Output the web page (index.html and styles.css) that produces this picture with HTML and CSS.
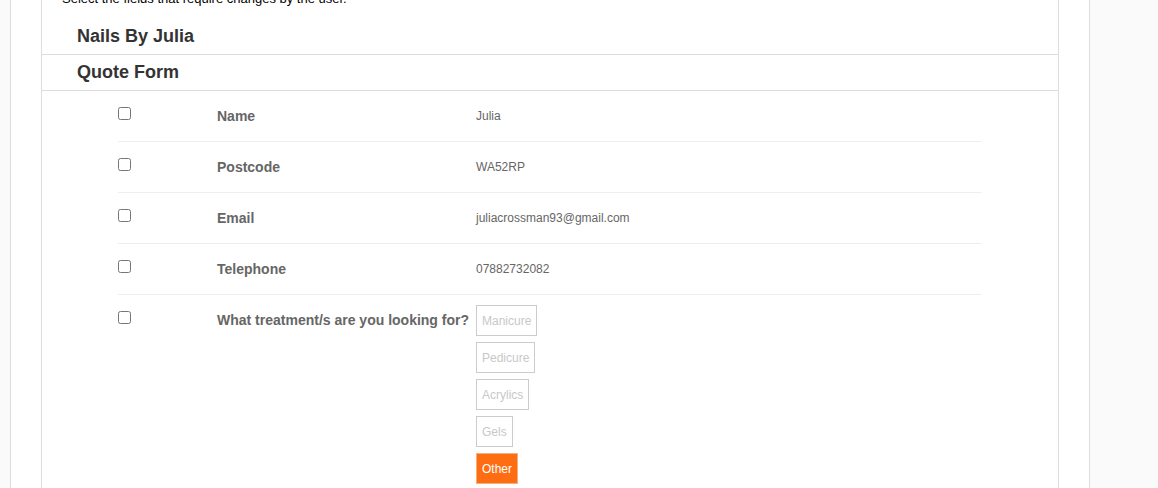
FILE: index.html
```html
<!DOCTYPE html>
<html lang="en">

<head>
    <meta charset="UTF-8">
    <meta name="viewport" content="width=device-width, initial-scale=1.0">
    <title>Quote Form</title>
    <link rel="stylesheet" href="styles.css">
</head>

<body>
    <div class="page">
        <div class="panel">
            <p class="intro">Select the fields that require changes by the user.</p>
            <div class="section_title">Nails By Julia</div>
            <div class="section_title">Quote Form</div>
            <div class="fields">
                <div class="field_row">
                    <div class="check"><input type="checkbox"></div>
                    <div class="label">Name</div>
                    <div class="value">Julia</div>
                </div>
                <div class="field_row">
                    <div class="check"><input type="checkbox"></div>
                    <div class="label">Postcode</div>
                    <div class="value">WA52RP</div>
                </div>
                <div class="field_row">
                    <div class="check"><input type="checkbox"></div>
                    <div class="label">Email</div>
                    <div class="value">juliacrossman93@gmail.com</div>
                </div>
                <div class="field_row">
                    <div class="check"><input type="checkbox"></div>
                    <div class="label">Telephone</div>
                    <div class="value">07882732082</div>
                </div>
                <div class="field_row last">
                    <div class="check"><input type="checkbox"></div>
                    <div class="label">What treatment/s are you looking for?</div>
                    <div class="options">
                        <span class="option">Manicure</span>
                        <span class="option">Pedicure</span>
                        <span class="option">Acrylics</span>
                        <span class="option">Gels</span>
                        <span class="option selected">Other</span>
                    </div>
                </div>
            </div>
        </div>
    </div>
</body>

</html>
```

FILE: styles.css
```css
* {
    margin: 0px;
    padding: 0px;
    box-sizing: border-box;
}

html,
body {
    height: 100%;
    overflow: hidden;
}

body {
    background-color: #fafafa;
    font-family: "Liberation Sans", Arial, sans-serif;
}

.page {
    width: 1080px;
    min-height: 520px;
    margin-left: 10px;
    margin-top: -12px;
    padding: 0 30px;
    background-color: #fff;
    border-left: 1px solid #ddd;
    border-right: 1px solid #ddd;
}

.panel {
    min-height: 520px;
    border-left: 1px solid #ddd;
    border-right: 1px solid #ddd;
}

.intro {
    height: 31px;
    padding-top: 3px;
    padding-left: 20px;
    font-size: 13px;
    line-height: 16px;
    color: #000;
}

.section_title {
    height: 36px;
    padding-left: 35px;
    border-bottom: 1px solid #ddd;
    font-size: 18px;
    font-weight: bold;
    line-height: 35px;
    color: #333;
}

.fields {
    width: 863px;
    margin-left: 76px;
}

.field_row {
    display: flex;
    align-items: flex-start;
    height: 51px;
    padding-top: 10px;
    border-bottom: 1px solid #eee;
}

.field_row.last {
    height: auto;
    border-bottom: none;
}

.check {
    width: 99px;
    flex-shrink: 0;
}

.check input {
    display: block;
    width: 13px;
    height: 13px;
    margin: 6px 0 0 0;
}

.label {
    width: 259px;
    flex-shrink: 0;
    font-size: 14px;
    font-weight: bold;
    line-height: 30px;
    color: #666;
}

.value {
    font-size: 12px;
    line-height: 30px;
    color: #666;
}

.options {
    display: flex;
    flex-direction: column;
    align-items: flex-start;
}

.option {
    display: inline-block;
    height: 31px;
    margin-bottom: 6px;
    padding: 7px 5px 5px;
    border: 1px solid #ccc;
    font-size: 12px;
    line-height: 17px;
    color: #c8c8c8;
}

.option.selected {
    background-color: #ff6d12;
    border-color: #f0b080;
    color: #fff;
}
```
